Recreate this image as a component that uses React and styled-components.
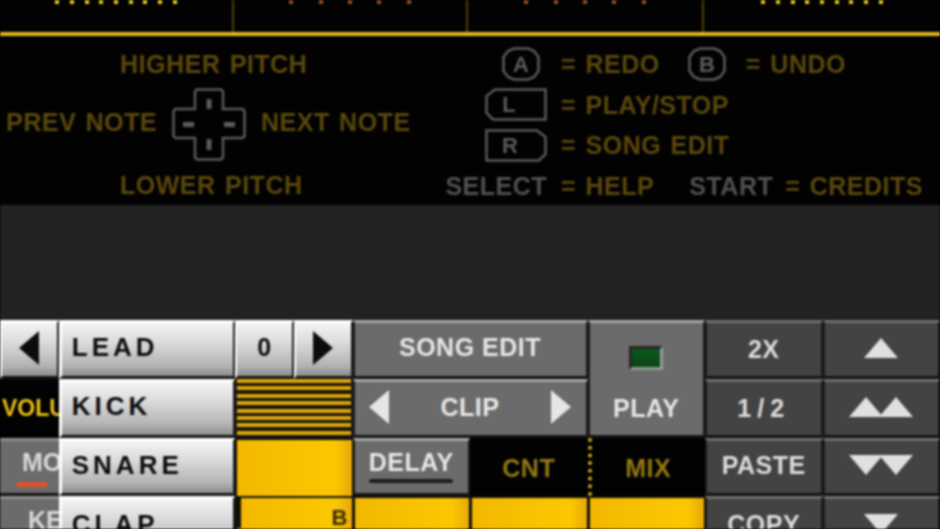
import styled, { createGlobalStyle } from "styled-components";

const GlobalStyle = createGlobalStyle`
    html, body {
        margin: 0;
        padding: 0;
        background: #000;
    }
    #root {
        width: 940px;
        height: 529px;
        overflow: hidden;
    }
`

const pixelFont = `"Liberation Sans", Arial, sans-serif`

const tones = {
    light: {
        fill: "linear-gradient(#f4f4f4 0%, #dcdcdc 35%, #b4b4b4 80%, #8c8c8c 100%)",
        edge: "#ffffff",
        text: "#0c0c0c",
    },
    mid: {
        fill: "#6b6b6b",
        edge: "#a6a6a6",
        text: "#e6e6e6",
    },
    dark: {
        fill: "#434343",
        edge: "#6e6e6e",
        text: "#dcdcdc",
    },
}

const channels = [
    { dots: 9, gap: 10.7, color: "#e0d020" },
    { dots: 5, gap: 25.4, color: "#a04c1e" },
    { dots: 5, gap: 25.4, color: "#a04c1e" },
    { dots: 9, gap: 10.7, color: "#e0d020" },
]

export default function App() {
    return (
        <Screen>
            <GlobalStyle />
            <TopScreen>
                <ChannelStrip>
                    {channels.map((channel, i) => (
                        <Channel key={i}>
                            {Array.from({ length: channel.dots }).map((_, j) => (
                                <Dot key={j} $color={channel.color} $gap={j === 0 ? 0 : channel.gap} />
                            ))}
                        </Channel>
                    ))}
                </ChannelStrip>
                <Help>
                    <PadHelp>
                        <PitchLabel>HIGHER PITCH</PitchLabel>
                        <PadRow>
                            <NoteText>PREV NOTE</NoteText>
                            <DPad />
                            <NoteText>NEXT NOTE</NoteText>
                        </PadRow>
                        <PitchLabel>LOWER PITCH</PitchLabel>
                    </PadHelp>
                    <KeysHelp>
                        <KeyRow>
                            <KeyCell $inset={7}><RoundKey label="A" /></KeyCell>
                            <HelpText>= REDO</HelpText>
                            <SecondKey><RoundKey label="B" /></SecondKey>
                            <HelpText>= UNDO</HelpText>
                        </KeyRow>
                        <KeyRow>
                            <KeyCell><ShoulderKey label="L" /></KeyCell>
                            <HelpText>= PLAY/STOP</HelpText>
                        </KeyRow>
                        <KeyRow>
                            <KeyCell><ShoulderKey label="R" flip /></KeyCell>
                            <HelpText>= SONG EDIT</HelpText>
                        </KeyRow>
                        <KeyRow>
                            <KeyCell><GreyText>SELECT</GreyText></KeyCell>
                            <HelpText>= HELP</HelpText>
                            <StartText>START</StartText>
                            <HelpText>= CREDITS</HelpText>
                        </KeyRow>
                    </KeysHelp>
                </Help>
            </TopScreen>
            <Spacer />
            <Panel>
                <Button $tone="light" $span={1}><Triangle dir="left" color="#0c0c0c" /></Button>
                <ListItem>LEAD</ListItem>
                <Button $tone="light" $span={1}><Label $tone="light">0</Label></Button>
                <Button $tone="light" $span={1}><Triangle dir="right" color="#0c0c0c" /></Button>
                <Button $tone="mid" $span={4}><Label $tone="mid">SONG EDIT</Label></Button>
                <PlayButton>
                    <Led />
                    <Label $tone="mid">PLAY</Label>
                </PlayButton>
                <Button $tone="dark" $span={2}><Label $tone="dark" $drop={4}>2X</Label></Button>
                <Button $tone="dark" $span={2}><Triangle dir="up" color="#e0e0e0" /></Button>

                <VolumeCell>VOLU</VolumeCell>
                <ListItem>KICK</ListItem>
                <StripeCell />
                <ClipButton>
                    <Triangle dir="left" color="#e6e6e6" />
                    <Label $tone="mid" $drop={2}>CLIP</Label>
                    <Triangle dir="right" color="#e6e6e6" />
                </ClipButton>
                <Button $tone="dark" $span={2}><Label $tone="dark" $drop={3} $spacing={6}>1/2</Label></Button>
                <TriangleButton $tone="dark" $span={2}>
                    <Triangle dir="up" color="#e0e0e0" /><Triangle dir="up" color="#e0e0e0" />
                </TriangleButton>

                <SideButton $pad={22}>MO<RedMark /></SideButton>
                <ListItem>SNARE</ListItem>
                <YellowCell $span={2} />
                <DelayButton>
                    <Label $tone="mid">DELAY</Label>
                    <DelayBar />
                </DelayButton>
                <KnobLabel $span={2}>CNT</KnobLabel>
                <KnobLabel $span={2} $dotted>MIX</KnobLabel>
                <Button $tone="dark" $span={2}><Label $tone="dark">PASTE</Label></Button>
                <TriangleButton $tone="dark" $span={2}>
                    <Triangle dir="down" color="#e0e0e0" /><Triangle dir="down" color="#e0e0e0" />
                </TriangleButton>

                <SideButton $pad={28}>KE</SideButton>
                <ListItem>CLAP</ListItem>
                <YellowCell $span={2}>
                    <Cursor />
                    <CellNote>B</CellNote>
                </YellowCell>
                <YellowCell $span={2} />
                <YellowCell $span={2} />
                <YellowCell $span={2} />
                <Button $tone="dark" $span={2}><Label $tone="dark">COPY</Label></Button>
                <Button $tone="dark" $span={2}><Triangle dir="down" color="#e0e0e0" /></Button>
            </Panel>
        </Screen>
    )
}

function DPad() {
    return (
        <DPadIcon viewBox="0 0 74 73">
            <path d="M25 1.5H49L51 3.5V21H70.5L72.5 23V48L70.5 50H51V69.5L49 71.5H25L23 69.5V50H3.5L1.5 48V23L3.5 21H23V3.5Z" fill="none" stroke="#5a5a5a" strokeWidth="2.5" />
            <g fill="#5a5a5a">
                <rect x="34.5" y="11" width="5" height="10" />
                <rect x="34.5" y="51" width="5" height="11" />
                <rect x="11" y="34" width="11" height="5" />
                <rect x="52" y="34" width="11" height="5" />
            </g>
        </DPadIcon>
    )
}

function RoundKey({ label }) {
    return (
        <KeyIcon viewBox="0 0 38 34" width="38" height="34">
            <path d="M12 1.5H26L32 4L36.5 10V24L32 30L26 32.5H12L6 30L1.5 24V10L6 4Z" fill="none" stroke="#5a5a5a" strokeWidth="2.5" />
            <KeyLetter x="19" y="24.5" textAnchor="middle">{label}</KeyLetter>
        </KeyIcon>
    )
}

function ShoulderKey({ label, flip }) {
    const outline = flip
        ? "M1.5 1.5H52L60.5 8V25L54 31.5H1.5Z"
        : "M60.5 1.5H10L1.5 8V25L8 31.5H60.5Z"
    return (
        <KeyIcon viewBox="0 0 62 33" width="62" height="33">
            <path d={outline} fill="none" stroke="#5a5a5a" strokeWidth="2.5" />
            <KeyLetter x={flip ? 25 : 24} y="24" textAnchor="middle">{label}</KeyLetter>
        </KeyIcon>
    )
}

function Triangle({ dir, color }) {
    const shapes = {
        left: { box: "0 0 20 34", size: [20, 34], d: "M0 17L20 0V34Z" },
        right: { box: "0 0 20 34", size: [20, 34], d: "M20 17L0 0V34Z" },
        up: { box: "0 0 34 20", size: [34, 20], d: "M17 0L34 20H0Z" },
        down: { box: "0 0 34 20", size: [34, 20], d: "M17 20L34 0H0Z" },
    }
    const shape = shapes[dir]
    return (
        <svg viewBox={shape.box} width={shape.size[0]} height={shape.size[1]}>
            <path d={shape.d} fill={color} />
        </svg>
    )
}

const Screen = styled.div`
    width: 940px;
    height: 529px;
    display: flex;
    flex-direction: column;
    overflow: hidden;
    filter: blur(0.8px);
    font-family: ${pixelFont};
`

const TopScreen = styled.section`
    height: 205px;
    flex: none;
    display: flex;
    flex-direction: column;
    background: #020202;
`

const ChannelStrip = styled.div`
    height: 32px;
    flex: none;
    display: grid;
    grid-template-columns: 234px 234px 236px 236px;
    border-bottom: 4px solid #e2b814;
`

const Channel = styled.div`
    display: flex;
    justify-content: center;
    align-items: flex-start;
    border-right: 2px solid #4e4208;
    &:last-child {
        border-right: none;
    }
`

const Dot = styled.span`
    width: 4px;
    height: 4px;
    margin-left: ${props => props.$gap}px;
    background: ${props => props.$color};
`

const Help = styled.div`
    flex: 1;
    display: flex;
    padding: 8px 0 0 6px;
`

const helpType = `
    font-size: 25px;
    font-weight: 700;
    line-height: 40px;
    letter-spacing: 0.5px;
    word-spacing: 2px;
    white-space: nowrap;
`

const HelpText = styled.span`
    ${helpType}
    color: #5a470a;
`

const NoteText = styled(HelpText)`
    margin-bottom: 5px;
`

const GreyText = styled.span`
    ${helpType}
    color: #505050;
`

const StartText = styled(GreyText)`
    margin: 0 12px 0 35px;
`

const PadHelp = styled.div`
    width: 441px;
    flex: none;
    display: flex;
    flex-direction: column;
`

const PitchLabel = styled(HelpText)`
    margin-left: 114px;
`

const PadRow = styled.div`
    height: 81px;
    display: flex;
    align-items: center;
    gap: 15px;
`

const DPadIcon = styled.svg`
    width: 74px;
    height: 73px;
    flex: none;
`

const KeysHelp = styled.div`
    display: flex;
    flex-direction: column;
`

const KeyRow = styled.div`
    height: 40.5px;
    display: flex;
    align-items: center;
`

const KeyCell = styled.div`
    width: 100px;
    box-sizing: border-box;
    margin-right: 14px;
    padding-right: ${props => props.$inset || 0}px;
    display: flex;
    justify-content: flex-end;
    flex: none;
`

const SecondKey = styled.div`
    margin: 0 20px 0 28px;
    display: flex;
`

const KeyIcon = styled.svg`
    display: block;
`

const KeyLetter = styled.text`
    font-family: ${pixelFont};
    font-size: 22px;
    font-weight: 700;
    fill: #5a5a5a;
`

const Spacer = styled.div`
    height: 115px;
    flex: none;
    background: #222222;
`

const Panel = styled.section`
    flex: none;
    height: 235px;
    display: grid;
    grid-template-columns: repeat(16, 58.75px);
    grid-auto-rows: 58.75px;
    background: #1a1a1a;
`

const Button = styled.div`
    grid-column: span ${props => props.$span};
    box-sizing: border-box;
    display: flex;
    align-items: center;
    justify-content: center;
    padding-bottom: 3px;
    background: ${props => tones[props.$tone].fill};
    border-top: 3px solid ${props => tones[props.$tone].edge};
    border-left: 2px solid ${props => props.$tone === "light" ? "#ffffff" : "#1a1a1a"};
    border-right: 2px solid #1a1a1a;
    border-bottom: 3px solid #141414;
`

const TriangleButton = styled(Button)`
    svg + svg {
        margin-left: -4px;
    }
`

const Label = styled.span`
    font-size: 25px;
    font-weight: 700;
    letter-spacing: ${props => props.$spacing ?? 0.5}px;
    margin-top: ${props => props.$drop ?? 0}px;
    white-space: nowrap;
    color: ${props => tones[props.$tone].text};
`

const ListItem = styled(Button).attrs({ $tone: "light", $span: 3 })`
    justify-content: flex-start;
    padding-left: 10px;
    font-size: 26px;
    font-weight: 700;
    color: #0c0c0c;
    letter-spacing: 4px;
    border-left-width: 3px;
    white-space: nowrap;
`

const PlayButton = styled(Button).attrs({ $tone: "mid", $span: 2 })`
    grid-row: span 2;
    flex-direction: column;
    gap: 24px;
    padding-top: 14px;
`

const Led = styled.div`
    width: 34px;
    height: 24px;
    background: linear-gradient(#0a5a1c, #0a4414);
    border: 3px solid #262626;
    border-bottom-color: #8a9a8a;
    border-right-color: #9a9a9a;
    box-sizing: border-box;
`

const ClipButton = styled(Button).attrs({ $tone: "mid", $span: 4 })`
    justify-content: space-between;
    padding: 0 14px 3px;
`

const VolumeCell = styled.div`
    overflow: hidden;
    background: #020202;
    color: #e8c018;
    font-size: 23px;
    font-weight: 700;
    line-height: 58px;
    padding-left: 2px;
    white-space: nowrap;
`

const SideButton = styled.div`
    position: relative;
    overflow: hidden;
    box-sizing: border-box;
    background: #6b6b6b;
    border-top: 3px solid #8e8e8e;
    border-bottom: 3px solid #141414;
    color: #d8d8d8;
    font-size: 25px;
    font-weight: 700;
    line-height: 42px;
    padding-left: ${props => props.$pad}px;
    white-space: nowrap;
`

const RedMark = styled.span`
    position: absolute;
    left: 17px;
    bottom: 6px;
    width: 30px;
    height: 5px;
    background: #e0502a;
`

const StripeCell = styled.div`
    grid-column: span 2;
    background: repeating-linear-gradient(#d8a80e 0 4px, #1a1204 4px 7.4px);
    border-right: 2px solid #1a1a1a;
    border-left: 2px solid #1a1a1a;
    border-bottom: 2px solid #141414;
`

const YellowCell = styled.div`
    grid-column: span ${props => props.$span};
    position: relative;
    box-sizing: border-box;
    background: linear-gradient(90deg, #f2b800 0%, #fcc800 85%, #e8a808 100%);
    border-left: 2px solid #0e0e0e;
    border-right: 1px solid #0e0e0e;
    border-top: 2px solid #0e0e0e;
`

const Cursor = styled.span`
    position: absolute;
    left: 0;
    top: 0;
    width: 4px;
    height: 30px;
    background: #141008;
`

const CellNote = styled.span`
    position: absolute;
    right: 4px;
    top: 7px;
    font-size: 22px;
    font-weight: 700;
    color: #3c2c04;
`

const DelayButton = styled(Button).attrs({ $tone: "mid", $span: 2 })`
    flex-direction: column;
    gap: 2px;
`

const DelayBar = styled.span`
    width: 84px;
    height: 4px;
    background: #1c1c1c;
    border-radius: 2px;
`

const KnobLabel = styled.div`
    grid-column: span ${props => props.$span};
    box-sizing: border-box;
    background: #020202;
    display: flex;
    align-items: center;
    justify-content: center;
    padding-top: 4px;
    color: #94780f;
    font-size: 25px;
    font-weight: 700;
    letter-spacing: 0.5px;
    border-left: ${props => props.$dotted ? "4px dotted #d8b010" : "none"};
`
